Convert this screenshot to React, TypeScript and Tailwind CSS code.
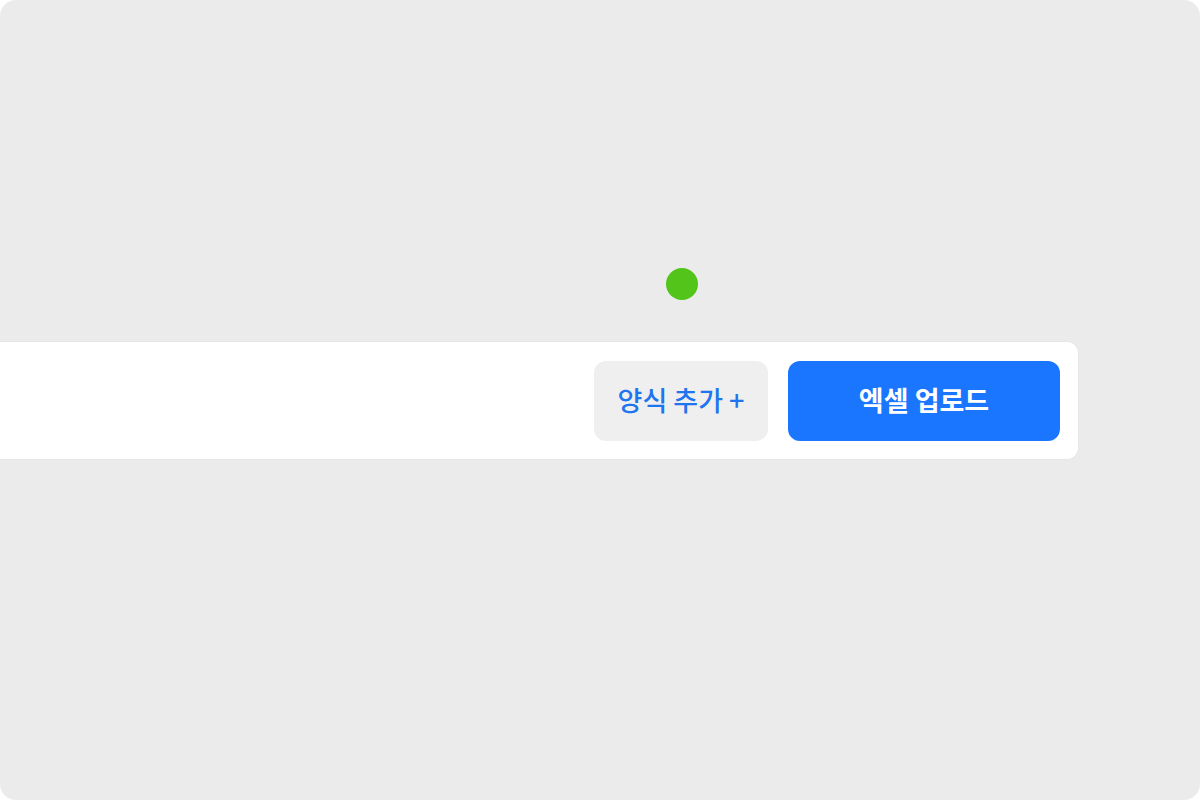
export default function App() {
  return (
    <div className="h-[800px] w-[1200px] bg-white">
      <div
        className="flex h-full w-full flex-col rounded-2xl bg-[#ebebeb]"
        style={{ fontFamily: '"Noto Sans CJK KR", "Noto Sans", sans-serif' }}
      >
        <div className="ml-[666px] mt-[268px] h-8 w-8 rounded-full bg-[#52c41a]" />
        <div className="mt-[41px] flex h-[119px] w-[1079px] items-center justify-end gap-5 rounded-r-xl border border-l-0 border-[#e6e6e6] bg-white pr-[18px]">
          <button className="flex h-20 w-[174px] items-center justify-center rounded-xl bg-[#efefef] text-[27px] font-medium text-[#1f74f0]">
            양식 추가 +
          </button>
          <button className="flex h-20 w-[272px] items-center justify-center rounded-xl bg-[#1a75ff] text-[27px] font-semibold text-white">
            엑셀 업로드
          </button>
        </div>
      </div>
    </div>
  );
}
